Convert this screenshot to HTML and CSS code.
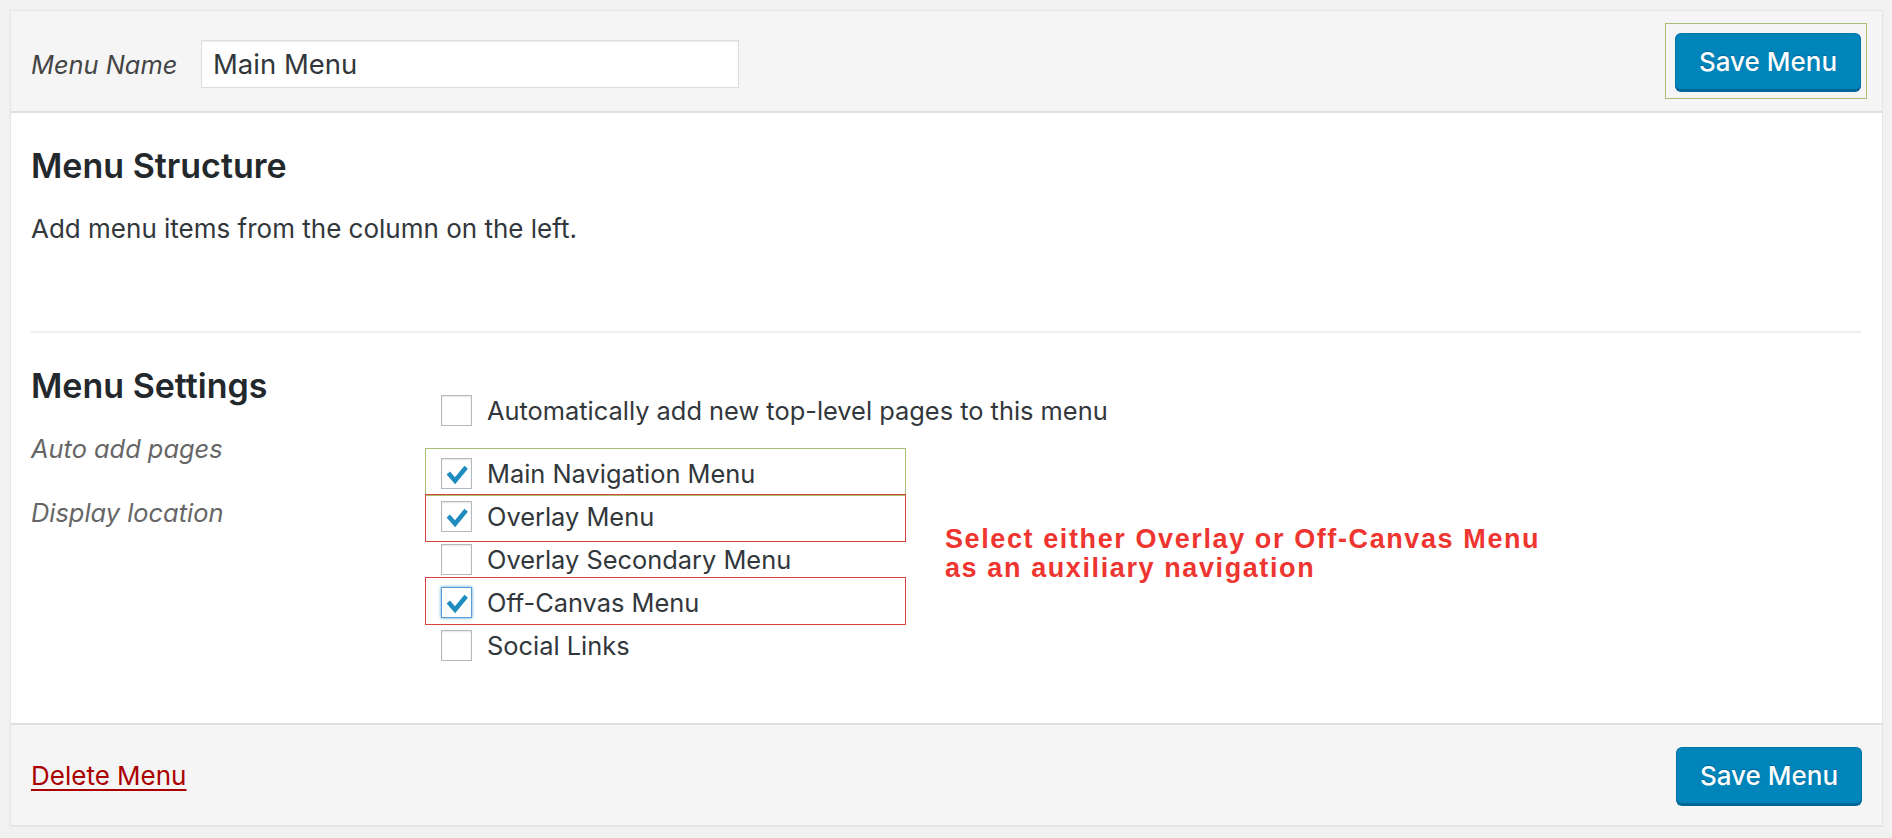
FILE: index.html
```html
<!DOCTYPE html>
<html lang="en">
<head>
<meta charset="utf-8">
<title>Menus</title>
<link rel="stylesheet" href="styles.css">
</head>
<body>
<div class="panel">
  <div class="panel-header">
    <label class="name-label" for="menu-name">Menu Name</label>
    <input id="menu-name" class="name-input" type="text" value="Main Menu">
    <span class="spacer"></span>
    <span class="mark-green"><button class="btn-primary" type="button">Save Menu</button></span>
  </div>

  <div class="panel-body">
    <h3 class="section-title">Menu Structure</h3>
    <p class="instructions">Add menu items from the column on the left.</p>

    <div class="settings">
      <div class="settings-labels">
        <h3 class="section-title settings-title">Menu Settings</h3>
        <div class="howto howto-auto">Auto add pages</div>
        <div class="howto">Display location</div>
      </div>
      <div class="settings-inputs">
        <div class="check-row">
          <span class="box"></span>
          <span class="check-text">Automatically add new top-level pages to this menu</span>
        </div>
        <div class="locations">
          <div class="loc-list">
            <div class="check-row anno anno-green">
              <span class="box checked"><svg viewBox="0 0 30 30"><path d="M6.5 14.5 L13.5 22.5 L25 8.5"/></svg></span>
              <span class="check-text">Main Navigation Menu</span>
            </div>
            <div class="check-row anno anno-red">
              <span class="box checked"><svg viewBox="0 0 30 30"><path d="M6.5 14.5 L13.5 22.5 L25 8.5"/></svg></span>
              <span class="check-text">Overlay Menu</span>
            </div>
            <div class="check-row">
              <span class="box"></span>
              <span class="check-text">Overlay Secondary Menu</span>
            </div>
            <div class="check-row anno anno-red anno-low">
              <span class="box checked focused"><svg viewBox="0 0 30 30"><path d="M6.5 14.5 L13.5 22.5 L25 8.5"/></svg></span>
              <span class="check-text">Off-Canvas Menu</span>
            </div>
            <div class="check-row">
              <span class="box"></span>
              <span class="check-text">Social Links</span>
            </div>
          </div>
          <p class="note">Select either Overlay or Off-Canvas Menu<br>as an auxiliary navigation</p>
        </div>
      </div>
    </div>
  </div>

  <div class="panel-footer">
    <a class="delete-link" href="#">Delete Menu</a>
    <span class="spacer"></span>
    <button class="btn-primary" type="button">Save Menu</button>
  </div>
</div>
</body>
</html>
```

FILE: styles.css
```css
* { box-sizing: border-box; }

html, body {
  margin: 0;
  padding: 0;
  background: #f1f1f1;
}

body {
  font-family: Inter, "Open Sans", "DejaVu Sans", sans-serif;
  font-size: 26px;
  color: #32373c;
  padding: 10px 9px 12px 10px;
}

.panel {
  background: #fff;
  border: 1px solid #e5e5e5;
  box-shadow: 0 1px 1px rgba(0,0,0,0.04);
}

.panel-header,
.panel-footer {
  display: flex;
  align-items: center;
  background: #f5f5f5;
  height: 102px;
  padding: 0 15px 0 20px;
}

.panel-header {
  border-bottom: 2px solid #dfdfdf;
}

.panel-footer {
  border-top: 2px solid #dfdfdf;
  padding-right: 20px;
}

.spacer { flex: 1; }

.name-label {
  font-style: italic;
  font-size: 25.4px;
  color: #444;
  width: 170px;
  margin-top: 7px;
}

.name-input {
  width: 538px;
  height: 48px;
  border: 1px solid #ddd;
  box-shadow: inset 0 1px 2px rgba(0,0,0,0.07);
  font-family: inherit;
  font-size: 27.5px;
  color: #32373c;
  padding: 0 11px;
  margin-top: 6px;
  background: #fff;
}

.mark-green {
  display: inline-flex;
  border: 1px solid #a7bf73;
  padding: 9px 5px 8px 9px;
}

.btn-primary {
  font-family: inherit;
  font-size: 26px;
  font-weight: 500;
  color: #fff;
  background: #0085ba;
  border: 1px solid #0073aa;
  border-bottom-color: #006799;
  border-radius: 6px;
  box-shadow: 0 2px 0 #006799;
  text-shadow: 0 -1px 1px #006799;
  height: 57px;
  width: 186px;
  padding: 0;
  cursor: pointer;
}

.panel-body {
  padding: 0 21px 56px 20px;
}

.section-title {
  font-size: 34px;
  font-weight: 600;
  color: #23282d;
  line-height: 44px;
  margin: 31px 0 0;
}

.instructions {
  line-height: 36px;
  margin: 23px 0 0;
  padding-bottom: 84px;
  border-bottom: 2px solid #eee;
}

.settings {
  display: grid;
  grid-template-columns: 410px 1fr;
}

.settings-labels {
  display: flex;
  flex-direction: column;
}

.howto {
  font-style: italic;
  color: #666;
  font-size: 25.4px;
  line-height: 36px;
  margin-top: 28px;
}

.howto-auto { margin-top: 23px; }

.settings-inputs {
  padding-top: 56px;
}

.check-row {
  position: relative;
  display: flex;
  align-items: center;
  height: 43px;
}

.check-text {
  font-size: 25.4px;
}

.box {
  width: 31px;
  height: 31px;
  border: 1px solid #b4b9be;
  background: #fff;
  box-shadow: inset 0 1px 2px rgba(0,0,0,0.1);
  margin-right: 15px;
  display: flex;
  align-items: center;
  justify-content: center;
}

.box svg {
  width: 29px;
  height: 29px;
  fill: none;
  stroke: #1e8cbe;
  stroke-width: 4.6;
  stroke-linejoin: miter;
  stroke-linecap: butt;
}

.box.focused {
  border-color: #5b9dd9;
  box-shadow: 0 0 3px rgba(30,140,190,0.8);
}

.locations {
  display: flex;
  margin-top: 20px;
}

.loc-list {
  width: 504px;
  display: flex;
  flex-direction: column;
}

.anno::after {
  content: "";
  position: absolute;
  left: -16px;
  width: 479px;
  top: -4px;
  bottom: -1px;
  border: 1px solid #a7bf73;
  pointer-events: none;
}

.anno-red::after {
  border-color: #d9443a;
  top: -1px;
  bottom: -4px;
}

.anno-low::after {
  top: -4px;
  bottom: -1px;
}

.note {
  margin: 73px 0 0;
  font-family: "Liberation Sans", Arial, sans-serif;
  font-weight: 700;
  font-size: 27px;
  letter-spacing: 1.6px;
  line-height: 29px;
  color: #ee3530;
}

.delete-link {
  color: #a00;
  text-decoration: underline;
  text-underline-offset: 4px;
}
```
